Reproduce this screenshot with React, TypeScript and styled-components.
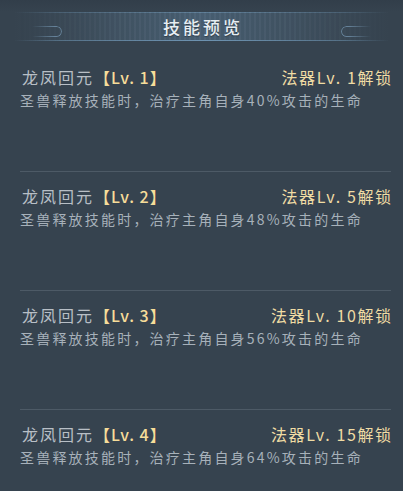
import React, {FC} from 'react';
import styled, {createGlobalStyle} from "styled-components";

const GlobalStyle = createGlobalStyle`
  html, body {
    margin: 0;
    padding: 0;
    background: #36434f;
  }
  * {
    box-sizing: border-box;
  }
`

const Panel = styled.div`
  width: 403px;
  height: 491px;
  overflow: hidden;
  background: linear-gradient(180deg, #323e4a 0px, #36434f 12px, #36434f 100%);
  font-family: "Noto Sans CJK SC", "Noto Sans", sans-serif;
`

const Header = styled.div`
  height: 53px;
  padding-top: 12px;
`

const Banner = styled.div`
  position: relative;
  height: 29px;
  margin: 0 14px;
  display: flex;
  align-items: center;
  justify-content: center;
  background: linear-gradient(90deg, rgba(74,96,115,0) 0%, rgba(74,96,115,0.2) 12%, rgba(74,96,115,0.6) 28%, #4a6175 50%, rgba(74,96,115,0.6) 72%, rgba(74,96,115,0.2) 88%, rgba(74,96,115,0) 100%);

  &::before, &::after {
    content: "";
    position: absolute;
    left: 0;
    right: 0;
    height: 1px;
    background: linear-gradient(90deg, rgba(110,150,180,0) 0%, rgba(110,150,180,0.5) 12%, #6d92b0 50%, rgba(110,150,180,0.5) 88%, rgba(110,150,180,0) 100%);
  }

  &::before {
    top: 0;
    opacity: 0.6;
  }

  &::after {
    bottom: 0;
  }
`

const Stripes = styled.span`
  position: absolute;
  inset: 0;
  background: repeating-linear-gradient(90deg, rgba(255,255,255,0.025) 0 2px, rgba(0,0,0,0.03) 2px 5px);
  -webkit-mask-image: linear-gradient(90deg, transparent 0%, #000 30%, #000 70%, transparent 100%);
  mask-image: linear-gradient(90deg, transparent 0%, #000 30%, #000 70%, transparent 100%);
`

const Pill = styled.span<{ $side: 'left' | 'right' }>`
  position: absolute;
  top: 14px;
  ${p => p.$side === 'left' ? 'left: 18px;' : 'right: 18px;'}
  width: 30px;
  height: 11px;
  border: 1px solid rgba(120, 155, 182, 0.7);
  ${p => p.$side === 'left'
    ? 'border-left: 0; border-radius: 0 6px 6px 0;'
    : 'border-right: 0; border-radius: 6px 0 0 6px;'}
  -webkit-mask-image: linear-gradient(${p => p.$side === 'left' ? '90deg' : '270deg'}, transparent 0%, #000 75%);
  mask-image: linear-gradient(${p => p.$side === 'left' ? '90deg' : '270deg'}, transparent 0%, #000 75%);
`

const Title = styled.h1`
  position: relative;
  margin: 0;
  font-size: 17px;
  font-weight: 500;
  letter-spacing: 3px;
  color: #e6edf2;
  text-shadow: 0 1px 1px rgba(0, 0, 0, 0.35);
  padding-left: 3px;
`

const List = styled.div`
  display: flex;
  flex-direction: column;
  padding: 0 12px 0 20px;
`

const Row = styled.div<{ $last?: boolean }>`
  padding: 13px 0 ${p => p.$last ? '20px' : '59px'} 0;
  border-bottom: ${p => p.$last ? '0' : '1px solid #4d5a66'};
`

const NameLine = styled.div`
  display: flex;
  justify-content: space-between;
  align-items: center;
  height: 22px;
  padding-left: 2px;
`

const SkillName = styled.span`
  font-size: 16px;
  letter-spacing: 2px;
  color: #b8bfc6;
`

const Level = styled.span`
  color: #f6dd9a;
  font-weight: 500;
  letter-spacing: 1px;
`

const Unlock = styled.span`
  font-size: 16px;
  letter-spacing: 1.6px;
  margin-right: -1.6px;
  color: #f0dca4;
`

const Desc = styled.div`
  height: 24px;
  line-height: 24px;
  font-size: 14px;
  letter-spacing: 2.2px;
  color: #a7b1ba;
`

type Skill = {
    level: number;
    unlock: number;
    percent: number;
};

const skills: Skill[] = [
    {level: 1, unlock: 1, percent: 40},
    {level: 2, unlock: 5, percent: 48},
    {level: 3, unlock: 10, percent: 56},
    {level: 4, unlock: 15, percent: 64},
];

const App: FC = () => {
    return <>
        <GlobalStyle/>
        <Panel>
            <Header>
                <Banner>
                    <Stripes/>
                    <Pill $side="left"/>
                    <Title>技能预览</Title>
                    <Pill $side="right"/>
                </Banner>
            </Header>
            <List>
                {skills.map((s, i) =>
                    <Row key={s.level} $last={i === skills.length - 1}>
                        <NameLine>
                            <SkillName>龙凤回元<Level>【Lv. {s.level}】</Level></SkillName>
                            <Unlock>法器Lv. {s.unlock}解锁</Unlock>
                        </NameLine>
                        <Desc>圣兽释放技能时，治疗主角自身{s.percent}%攻击的生命</Desc>
                    </Row>
                )}
            </List>
        </Panel>
    </>
};

export default App;
